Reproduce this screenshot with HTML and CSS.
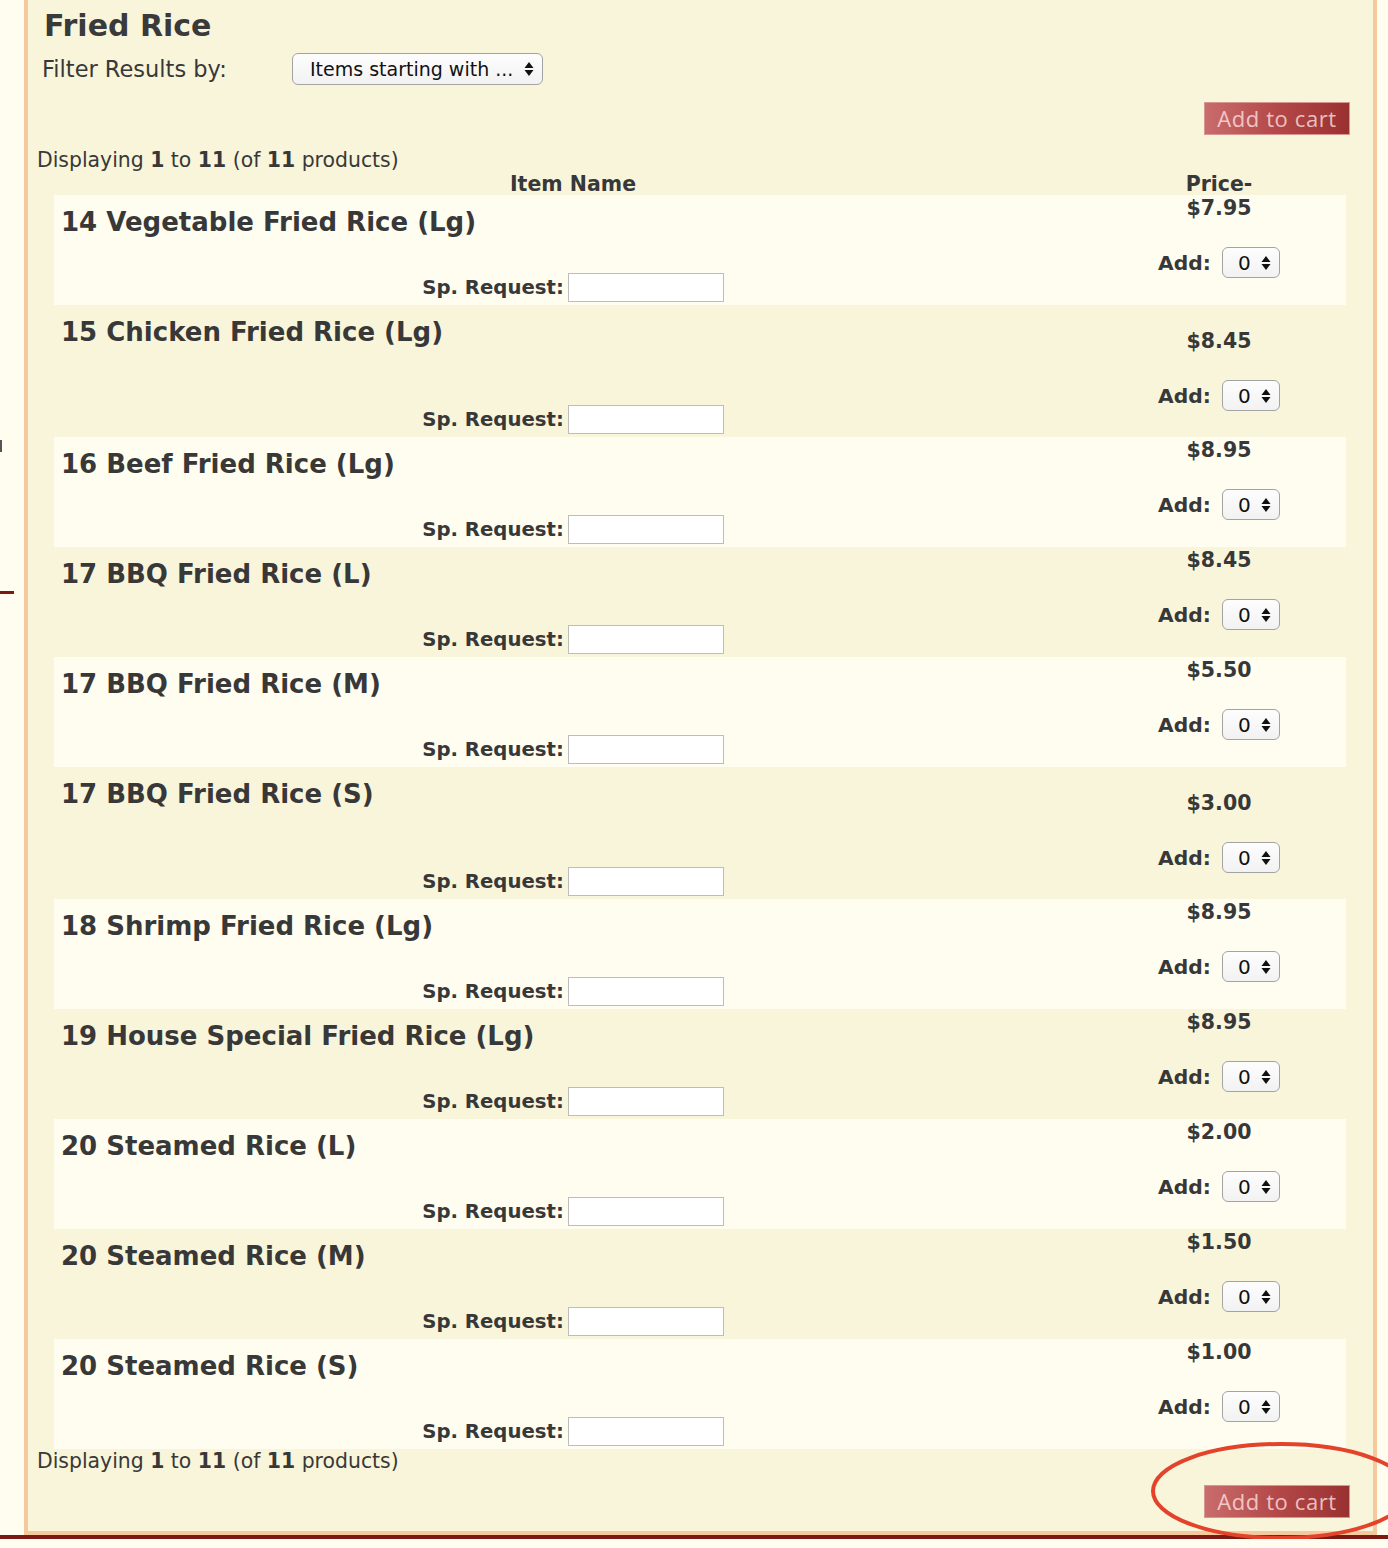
FILE: index.html
```html
<!DOCTYPE html>
<html lang="en">
<head>
<meta charset="utf-8">
<title>Fried Rice</title>
<link rel="stylesheet" href="styles.css">
</head>
<body>
<div class="page">
  <span class="side-mark"></span>
  <span class="side-rule"></span>
  <main class="panel">
    <h1 class="title">Fried Rice</h1>
    <div class="filter">
      <span class="filter-label">Filter Results by:</span>
      <div class="select select-wide"><span class="select-text">Items starting with ...</span><svg class="arrows" viewBox="0 0 10 16" width="10" height="16"><polygon points="0.5,7 5,1 9.5,7"/><polygon points="0.5,9 9.5,9 5,15"/></svg></div>
    </div>
    <div class="cart-row"><button class="cart-btn" type="button">Add to cart</button></div>
    <p class="count">Displaying <b>1</b> to <b>11</b> (of <b>11</b> products)</p>
    <div class="headings"><span>Item Name</span><span>Price-</span></div>

    <div class="rows">
      <div class="row light">
        <div class="row-main"><div class="name">14 Vegetable Fried Rice (Lg)</div><div class="sp"><span>Sp. Request:</span><input class="sp-input" type="text"></div></div>
        <div class="row-price"><div class="price">$7.95</div><div class="add"><span>Add:</span><div class="select select-qty"><span class="select-text">0</span><svg class="arrows" viewBox="0 0 10 16" width="10" height="16"><polygon points="0.5,7 5,1 9.5,7"/><polygon points="0.5,9 9.5,9 5,15"/></svg></div></div></div>
      </div>
      <div class="row tall">
        <div class="row-main"><div class="name">15 Chicken Fried Rice (Lg)</div><div class="sp"><span>Sp. Request:</span><input class="sp-input" type="text"></div></div>
        <div class="row-price"><div class="price">$8.45</div><div class="add"><span>Add:</span><div class="select select-qty"><span class="select-text">0</span><svg class="arrows" viewBox="0 0 10 16" width="10" height="16"><polygon points="0.5,7 5,1 9.5,7"/><polygon points="0.5,9 9.5,9 5,15"/></svg></div></div></div>
      </div>
      <div class="row light">
        <div class="row-main"><div class="name">16 Beef Fried Rice (Lg)</div><div class="sp"><span>Sp. Request:</span><input class="sp-input" type="text"></div></div>
        <div class="row-price"><div class="price">$8.95</div><div class="add"><span>Add:</span><div class="select select-qty"><span class="select-text">0</span><svg class="arrows" viewBox="0 0 10 16" width="10" height="16"><polygon points="0.5,7 5,1 9.5,7"/><polygon points="0.5,9 9.5,9 5,15"/></svg></div></div></div>
      </div>
      <div class="row">
        <div class="row-main"><div class="name">17 BBQ Fried Rice (L)</div><div class="sp"><span>Sp. Request:</span><input class="sp-input" type="text"></div></div>
        <div class="row-price"><div class="price">$8.45</div><div class="add"><span>Add:</span><div class="select select-qty"><span class="select-text">0</span><svg class="arrows" viewBox="0 0 10 16" width="10" height="16"><polygon points="0.5,7 5,1 9.5,7"/><polygon points="0.5,9 9.5,9 5,15"/></svg></div></div></div>
      </div>
      <div class="row light">
        <div class="row-main"><div class="name">17 BBQ Fried Rice (M)</div><div class="sp"><span>Sp. Request:</span><input class="sp-input" type="text"></div></div>
        <div class="row-price"><div class="price">$5.50</div><div class="add"><span>Add:</span><div class="select select-qty"><span class="select-text">0</span><svg class="arrows" viewBox="0 0 10 16" width="10" height="16"><polygon points="0.5,7 5,1 9.5,7"/><polygon points="0.5,9 9.5,9 5,15"/></svg></div></div></div>
      </div>
      <div class="row tall">
        <div class="row-main"><div class="name">17 BBQ Fried Rice (S)</div><div class="sp"><span>Sp. Request:</span><input class="sp-input" type="text"></div></div>
        <div class="row-price"><div class="price">$3.00</div><div class="add"><span>Add:</span><div class="select select-qty"><span class="select-text">0</span><svg class="arrows" viewBox="0 0 10 16" width="10" height="16"><polygon points="0.5,7 5,1 9.5,7"/><polygon points="0.5,9 9.5,9 5,15"/></svg></div></div></div>
      </div>
      <div class="row light">
        <div class="row-main"><div class="name">18 Shrimp Fried Rice (Lg)</div><div class="sp"><span>Sp. Request:</span><input class="sp-input" type="text"></div></div>
        <div class="row-price"><div class="price">$8.95</div><div class="add"><span>Add:</span><div class="select select-qty"><span class="select-text">0</span><svg class="arrows" viewBox="0 0 10 16" width="10" height="16"><polygon points="0.5,7 5,1 9.5,7"/><polygon points="0.5,9 9.5,9 5,15"/></svg></div></div></div>
      </div>
      <div class="row">
        <div class="row-main"><div class="name">19 House Special Fried Rice (Lg)</div><div class="sp"><span>Sp. Request:</span><input class="sp-input" type="text"></div></div>
        <div class="row-price"><div class="price">$8.95</div><div class="add"><span>Add:</span><div class="select select-qty"><span class="select-text">0</span><svg class="arrows" viewBox="0 0 10 16" width="10" height="16"><polygon points="0.5,7 5,1 9.5,7"/><polygon points="0.5,9 9.5,9 5,15"/></svg></div></div></div>
      </div>
      <div class="row light">
        <div class="row-main"><div class="name">20 Steamed Rice (L)</div><div class="sp"><span>Sp. Request:</span><input class="sp-input" type="text"></div></div>
        <div class="row-price"><div class="price">$2.00</div><div class="add"><span>Add:</span><div class="select select-qty"><span class="select-text">0</span><svg class="arrows" viewBox="0 0 10 16" width="10" height="16"><polygon points="0.5,7 5,1 9.5,7"/><polygon points="0.5,9 9.5,9 5,15"/></svg></div></div></div>
      </div>
      <div class="row">
        <div class="row-main"><div class="name">20 Steamed Rice (M)</div><div class="sp"><span>Sp. Request:</span><input class="sp-input" type="text"></div></div>
        <div class="row-price"><div class="price">$1.50</div><div class="add"><span>Add:</span><div class="select select-qty"><span class="select-text">0</span><svg class="arrows" viewBox="0 0 10 16" width="10" height="16"><polygon points="0.5,7 5,1 9.5,7"/><polygon points="0.5,9 9.5,9 5,15"/></svg></div></div></div>
      </div>
      <div class="row light">
        <div class="row-main"><div class="name">20 Steamed Rice (S)</div><div class="sp"><span>Sp. Request:</span><input class="sp-input" type="text"></div></div>
        <div class="row-price"><div class="price">$1.00</div><div class="add"><span>Add:</span><div class="select select-qty"><span class="select-text">0</span><svg class="arrows" viewBox="0 0 10 16" width="10" height="16"><polygon points="0.5,7 5,1 9.5,7"/><polygon points="0.5,9 9.5,9 5,15"/></svg></div></div></div>
      </div>
    </div>

    <p class="count count-bottom">Displaying <b>1</b> to <b>11</b> (of <b>11</b> products)</p>
    <div class="cart-row cart-row-bottom">
      <button class="cart-btn" type="button">Add to cart</button>
      <svg class="highlight" width="300" height="110" viewBox="0 0 300 110"><ellipse cx="150" cy="55" rx="128" ry="47"/></svg>
    </div>
  </main>
</div>
<div class="footer-rule"></div>
</body>
</html>
```

FILE: styles.css
```css
* { box-sizing: border-box; }

html, body {
  margin: 0;
  padding: 0;
}

body {
  background: #fefdf0;
  font-family: "DejaVu Sans", Verdana, sans-serif;
  color: #383838;
  overflow: hidden;
}

.page {
  position: relative;
  display: flex;
  padding-left: 24px;
}

.side-mark {
  position: absolute;
  left: 0;
  top: 440px;
  width: 2px;
  height: 12px;
  background: #555;
}

.side-rule {
  position: absolute;
  left: 0;
  top: 591px;
  width: 14px;
  height: 3px;
  background: #7b1a12;
}

.panel {
  width: 1353px;
  background: #f8f5da;
  border-left: 4px solid #f5c99b;
  border-right: 4px solid #f5c99b;
  border-bottom: 4px solid #f5c99b;
  padding-bottom: 13px;
}

.title {
  margin: 0;
  padding-left: 16px;
  height: 50px;
  line-height: 51px;
  font-size: 30px;
  font-weight: bold;
  color: #3a3a3a;
}

.filter {
  display: flex;
  align-items: center;
  height: 38px;
  padding-left: 14px;
}

.filter-label {
  width: 250px;
  font-size: 22.5px;
  line-height: 40px;
}

.select {
  display: flex;
  align-items: center;
  justify-content: space-between;
  border: 1px solid #a3a3a3;
  border-radius: 6px;
  background: linear-gradient(#fdfdfd, #f2f2f2);
  font-family: "DejaVu Sans", Verdana, sans-serif;
  font-weight: normal;
  color: #111;
}

.select-wide {
  width: 251px;
  height: 32px;
  padding: 0 8px 0 17px;
  font-size: 19px;
}

.select-qty {
  width: 58px;
  height: 31px;
  padding: 0 8px 0 15px;
  font-size: 20px;
}

.arrows {
  fill: #111;
  flex: none;
}

.cart-row {
  display: flex;
  justify-content: flex-end;
  padding-right: 23px;
  margin-top: 14px;
}

.cart-btn {
  width: 146px;
  height: 33px;
  padding: 0;
  border: 1px solid #d99494;
  background: linear-gradient(to right, #c96c6c 0%, #b44848 50%, #9a3131 100%);
  color: rgba(255, 228, 228, 0.78);
  font-family: "Open Sans", "DejaVu Sans", sans-serif;
  font-size: 22px;
  line-height: 31px;
  letter-spacing: 0.6px;
  cursor: pointer;
}

.count {
  margin: 14px 0 0;
  padding-left: 9px;
  height: 22px;
  line-height: 22px;
  font-size: 20.4px;
}

.count b { font-weight: bold; }

.headings {
  display: grid;
  grid-template-columns: 1038px 254px;
  margin: 0 26px;
  height: 24px;
  line-height: 26px;
  font-size: 20.5px;
  font-weight: bold;
  text-align: center;
}

.rows {
  margin: 0 27px 0 26px;
}

.row {
  display: grid;
  grid-template-columns: 1038px 254px;
  height: 110px;
}

.row.light { background: #fefdef; }

.row.tall { height: 132px; }

.row-main {
  display: flex;
  flex-direction: column;
  justify-content: space-between;
  padding: 12px 0 3px 7px;
}

.name {
  font-size: 26px;
  font-weight: bold;
  line-height: 30px;
}

.sp {
  display: flex;
  align-items: center;
  justify-content: center;
  gap: 4px;
  margin-left: -7px;
  font-size: 19.7px;
  font-weight: bold;
}

.sp-input {
  width: 156px;
  height: 29px;
  margin: 0;
  border: 1px solid #bdbdbd;
  background: #fff;
}

.row-price {
  display: flex;
  flex-direction: column;
  align-items: center;
  padding-top: 2px;
}

.row.tall .row-price { padding-top: 25px; }

.price {
  font-size: 20.5px;
  font-weight: bold;
  line-height: 22px;
}

.add {
  display: flex;
  align-items: center;
  gap: 11px;
  margin-top: 28px;
  font-size: 20.3px;
  font-weight: bold;
}

.count-bottom {
  margin-top: 1px;
}

.cart-row-bottom {
  position: relative;
  margin-top: 13px;
}

.highlight {
  position: absolute;
  right: -58px;
  top: -49px;
  overflow: visible;
  fill: none;
  stroke: #e3422b;
  stroke-width: 4;
}

.footer-rule {
  height: 4px;
  background: #7b1a12;
}
```
